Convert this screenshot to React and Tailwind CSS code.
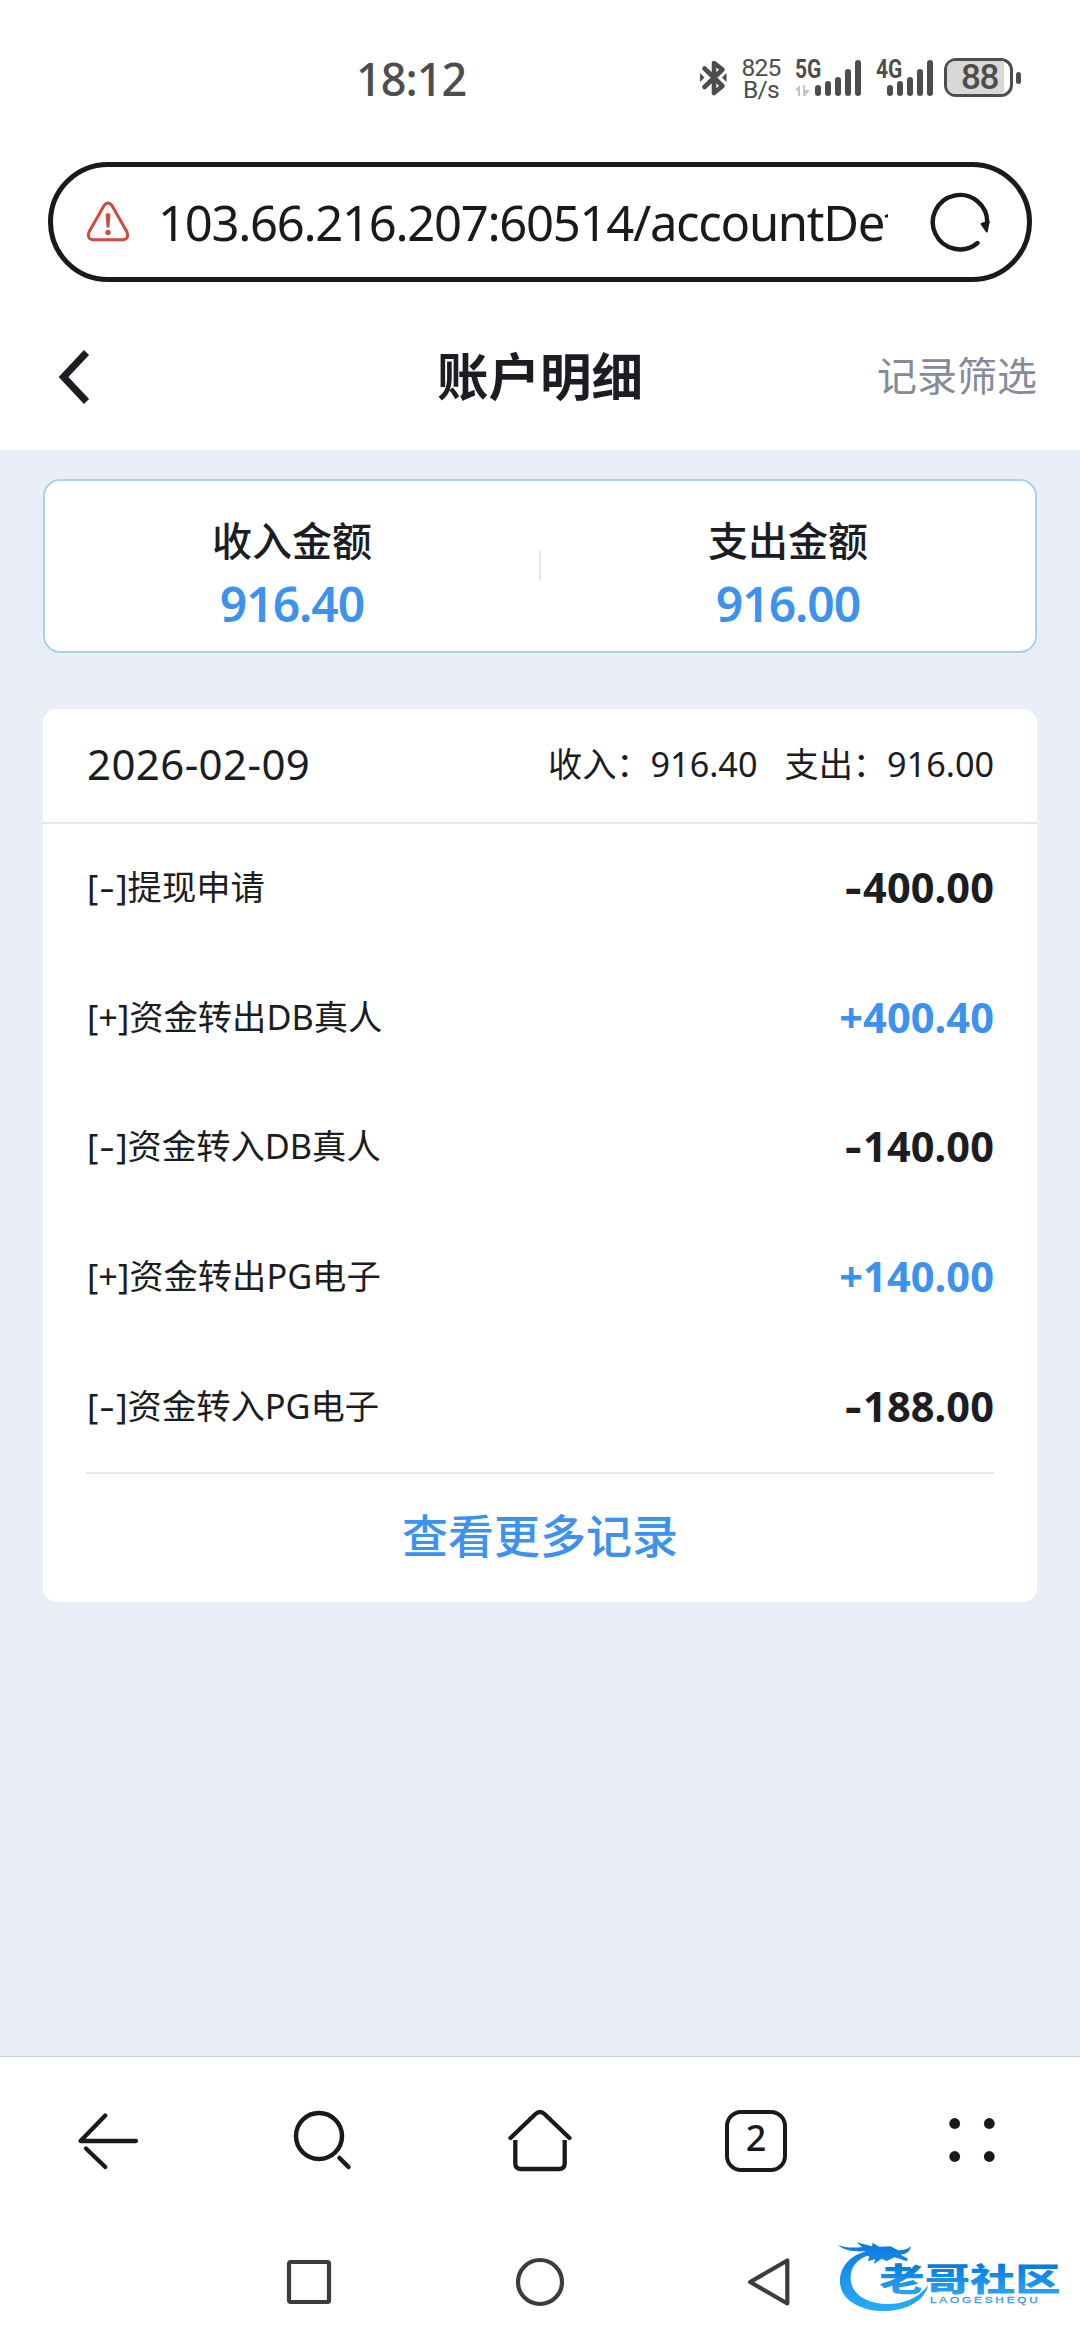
import React from "react";

const records = [
  { sign: "-", label: "提现申请", amount: "400.00" },
  { sign: "+", label: "资金转出DB真人", amount: "400.40" },
  { sign: "-", label: "资金转入DB真人", amount: "140.00" },
  { sign: "+", label: "资金转出PG电子", amount: "140.00" },
  { sign: "-", label: "资金转入PG电子", amount: "188.00" },
];

function Bluetooth() {
  return (
    <svg width="28" height="40" viewBox="0 0 28 40" fill="none" stroke="#4d4d4d" strokeWidth="4.6" strokeLinecap="round" strokeLinejoin="round">
      <path d="M4.5 11.5 L22.5 29 L14 36 V6 L22.5 12.5 L4.5 30" />
      <path d="M0 16 L4.5 20.5 L0 25 Z M26.5 16 L22 20.5 L26.5 25 Z" fill="#4d4d4d" stroke="none" />
    </svg>
  );
}

function Signal({ label, data }) {
  return (
    <div className="relative h-[40px] w-[66px]">
      <span className="absolute left-0 top-0 origin-left scale-x-[0.84] font-['Roboto'] text-[25px] font-bold leading-[20px]">{label}</span>
      <svg className="absolute left-0 top-0" width="66" height="40" viewBox="0 0 66 40">
        {data && <path d="M0 30 L5 25 V36 H3 V31 Z M8 25 H10 V30 H15 L10 36 H8 Z" fill="#c4c4c4" />}
        <g stroke="#4d4d4d" strokeWidth="6" strokeLinecap="round">
          <path d={data ? "M23 28 V33" : "M14 28 V33"} />
          <path d={data ? "M33 24 V33" : "M24 24 V33"} />
          <path d={data ? "M43 20 V33" : "M34 20 V33"} />
          <path d={data ? "M53 12 V33" : "M44 12 V33"} />
          <path d={data ? "M63 3 V33" : "M54 3 V33"} />
        </g>
      </svg>
    </div>
  );
}

function StatusBar() {
  return (
    <div className="flex h-[162px] items-start text-[#4d4d4d]">
      <div className="ml-[356px] mt-[53px] w-[344px] text-[45px] font-medium leading-[52px] tracking-[-1px]">18:12</div>
      <div className="mt-[57px] flex">
        <Bluetooth />
        <div className="ml-[12px] w-[42px] text-center font-['Roboto'] text-[24.5px] leading-[22px] tracking-[-0.7px]">
          <div>825</div>
          <div>B/s</div>
        </div>
        <div className="ml-[13px] mt-[3px]"><Signal label="5G" data /></div>
        <div className="ml-[15px] mt-[3px]"><Signal label="4G" /></div>
        <div className="ml-[2px] mt-[1px] flex h-[39px] items-center">
          <div className="flex h-[39px] w-[69px] rounded-[12px] border-[3px] border-[#4d4d4d]">
            <div className="flex h-full w-[57px] items-center justify-center rounded-l-[8px] bg-[#d8d8d8] pl-[8px] font-['Roboto'] text-[35px] font-medium leading-[30px] tracking-[-1.5px]">88</div>
          </div>
          <div className="ml-[3px] h-[12px] w-[5px] rounded-full bg-[#4d4d4d]" />
        </div>
      </div>
    </div>
  );
}

function AddressBar() {
  return (
    <div className="mx-[48px] flex h-[120px] items-center rounded-full border-[5px] border-[#1a1a1a]">
      <svg className="ml-[33px] shrink-0" width="44" height="42" viewBox="0 0 44 42" fill="none" stroke="#cf4a3c" strokeWidth="3">
        <path d="M18.2 4.2 Q22 -0.4 25.8 4.2 L41 31 Q43.4 37.6 37.5 38.8 H6.5 Q0.6 37.6 3 31 Z" strokeLinejoin="round" />
        <path d="M19.6 13 Q22 11.4 24.4 13 L23.4 26.6 H20.6 Z" fill="#cf4a3c" stroke="none" />
        <circle cx="22" cy="31.5" r="2.7" fill="#cf4a3c" stroke="none" />
      </svg>
      <div className="ml-[28px] w-[730px] overflow-hidden whitespace-nowrap text-[49px] leading-[70px] tracking-[-1.3px] text-[#1a1a1a]">
        103.66.216.207:60514/accountDetail
      </div>
      <svg className="ml-[40px] shrink-0" width="64" height="64" viewBox="0 0 64 64" fill="none" stroke="#1a1a1a" strokeWidth="4.4" strokeLinecap="round">
        <path d="M49.5 53 A27.2 27.2 0 1 1 59.2 33" />
        <path d="M53.5 34 L60.6 31.5 L58.8 41.5 Z" fill="#1a1a1a" strokeWidth="2" strokeLinejoin="round" />
      </svg>
    </div>
  );
}

function Header() {
  return (
    <div className="flex h-[168px] items-center justify-between pl-[58px] pr-[43px] pt-[19px]">
      <div className="w-[160px]">
        <svg width="34" height="56" viewBox="0 0 34 56" fill="none" stroke="#1b1d22" strokeWidth="7">
          <path d="M28.5 4.5 L5.5 29 L28.5 53.5" />
        </svg>
      </div>
      <h1 className="text-[51.5px] font-bold leading-[60px] text-[#1b1d22]">账户明细</h1>
      <div className="w-[175px] text-right text-[40px] leading-[50px] text-[#868b99]">记录筛选</div>
    </div>
  );
}

function Total({ title, value }) {
  return (
    <div className="flex flex-1 flex-col items-center">
      <div className="text-[40px] font-medium leading-[56px]">{title}</div>
      <div className="mt-[7px] text-[48px] font-semibold leading-[56px] tracking-[-1px] text-[#3c92ee]">{value}</div>
    </div>
  );
}

function Summary() {
  return (
    <div className="flex h-[174px] rounded-[17px] border-2 border-[#aad2ef] bg-white pt-[32px]">
      <Total title="收入金额" value="916.40" />
      <div className="mt-[38px] h-[29px] w-[2px] bg-[#e4e6e9]" />
      <Total title="支出金额" value="916.00" />
    </div>
  );
}

function Row({ sign, label, amount }) {
  const income = sign === "+";
  return (
    <div className="flex h-[129.6px] items-center justify-between pb-[3px]">
      <span className="pl-[1px] text-[34.3px] leading-[50px]">
        [<span className={income ? "inline-block" : "inline-block w-[18px] scale-x-[1.4] text-center"}>{sign}</span>]{label}
      </span>
      <span className={income ? "text-[41.5px] font-bold leading-[50px] tracking-[0.1px] text-[#3c92ee]" : "text-[41.5px] font-bold leading-[50px] tracking-[0.1px]"}>
        <span className={income ? "inline-block" : "inline-block w-[18px] origin-left scale-x-[1.25]"}>{sign}</span>
        {amount}
      </span>
    </div>
  );
}

function DayCard() {
  return (
    <div className="mt-[56px] rounded-[14px] bg-white">
      <div className="flex h-[115px] items-center justify-between border-b-2 border-[#e3e5e8] px-[43px] pb-[4px]">
        <div className="pl-[1px] text-[42px] leading-[50px] tracking-[0.4px]">2026-02-09</div>
        <div className="flex gap-[27px] text-[34.2px] leading-[50px]">
          <span>收入：916.40</span>
          <span>支出：916.00</span>
        </div>
      </div>
      <div className="px-[43px]">
        {records.map((r) => (
          <Row key={r.sign + r.label} {...r} />
        ))}
        <div className="flex h-[130px] items-center justify-center border-t-2 border-[#e3e5e8] pb-[6px] text-[46px] font-medium leading-[60px] text-[#3c92ee]">查看更多记录</div>
      </div>
    </div>
  );
}

function Toolbar() {
  return (
    <div className="grid h-[168px] grid-cols-5 items-center justify-items-center border-t border-[#c9cbd0] bg-white text-[#1a1a1a]">
      <svg width="64" height="64" viewBox="0 0 64 64" fill="none" stroke="currentColor" strokeWidth="4.3" strokeLinecap="round">
        <path d="M60 32 H4.5 L29.3 6.5" strokeLinejoin="round" />
        <path d="M10 39.5 L29.3 58" />
      </svg>
      <svg width="64" height="64" viewBox="0 0 64 64" fill="none" stroke="currentColor" strokeWidth="4.5" strokeLinecap="round">
        <circle cx="27" cy="27" r="23" />
        <path d="M47.5 49 L56.5 58" />
      </svg>
      <svg width="66" height="66" viewBox="0 0 66 66" fill="none" stroke="currentColor" strokeWidth="4.3" strokeLinecap="round" strokeLinejoin="round">
        <path d="M3.5 30 L28.5 6 Q33 2 37.5 6 L62.5 30" />
        <path d="M8.3 32 V55.5 Q8.3 61 14.3 61 H51.7 Q57.7 61 57.7 55.5 V32" strokeLinecap="butt" />
      </svg>
      <div className="flex h-[62px] w-[62px] items-center justify-center rounded-[16px] border-[4.5px] border-[#1a1a1a] pb-[5px] text-[36px] font-medium leading-[50px]">2</div>
      <svg width="64" height="64" viewBox="0 0 64 64" fill="currentColor">
        <circle cx="14.7" cy="14.5" r="5.4" />
        <circle cx="49.3" cy="14.5" r="5.4" />
        <circle cx="14.7" cy="47.5" r="5.4" />
        <circle cx="49.3" cy="47.5" r="5.4" />
      </svg>
    </div>
  );
}

function SystemNav() {
  return (
    <div className="flex h-[116px] items-center bg-white pl-[195px]">
      {[
        <rect key="s" x="5" y="6" width="40" height="40" rx="1.5" />,
        <circle key="c" cx="26" cy="26" r="22" />,
        <path key="t" d="M43.3 4.5 V47.5 L6.2 26 Z" />,
      ].map((shape) => (
        <div key={shape.key} className="flex w-[230px] justify-center">
          <svg width="52" height="52" viewBox="0 0 52 52" fill="none" stroke="#3c3c3c" strokeWidth="4.2" strokeLinejoin="round">{shape}</svg>
        </div>
      ))}
    </div>
  );
}

function CommunityLogo() {
  return (
    <svg className="absolute bottom-0 right-0" width="340" height="120" viewBox="0 0 1020 360">
      <defs>
        <linearGradient id="logoBlue" x1="0" y1="60" x2="0" y2="275" gradientUnits="userSpaceOnUse">
          <stop offset="0" stopColor="#0d78e0" />
          <stop offset="1" stopColor="#27adf6" />
        </linearGradient>
        <linearGradient id="wordBlue" x1="0" y1="130" x2="0" y2="222" gradientUnits="userSpaceOnUse">
          <stop offset="0" stopColor="#0878dd" />
          <stop offset="1" stopColor="#2ba2f2" />
        </linearGradient>
      </defs>
      <g fill="url(#logoBlue)">
        <path d="M385 92 C325 105 298 145 300 188 C304 245 370 276 440 273 C505 270 556 240 564 195 C545 225 505 250 450 252 C385 254 335 225 332 178 C330 142 350 115 392 104 Z" />
        <path d="M295 76 C318 84 345 84 366 81 L350 67 L396 79 L398 68 L418 80 L452 79 L474 91 C490 91 505 87 512 78 C512 94 500 102 482 104 L504 116 L500 124 L464 112 L440 123 L425 116 L402 132 L405 118 L384 124 L388 108 L368 105 L376 94 C345 96 310 92 295 76 Z" />
      </g>
      <text x="418" y="212" textLength="544" lengthAdjust="spacingAndGlyphs" fontFamily="Noto Sans CJK SC, sans-serif" fontWeight="900" fontSize="96" fill="url(#wordBlue)">老哥社区</text>
      <text x="570" y="250" textLength="332" lengthAdjust="spacingAndGlyphs" fontFamily="Liberation Sans, sans-serif" fontSize="29" letterSpacing="7" fill="#3f9ae6" stroke="#3f9ae6" strokeWidth="1">LAOGESHEQU</text>
    </svg>
  );
}

export default function App() {
  return (
    <div className="relative flex h-[2340px] w-[1080px] flex-col overflow-hidden bg-white font-['Noto_Sans','Noto_Sans_CJK_SC',sans-serif] text-[#1b1d22]">
      <StatusBar />
      <AddressBar />
      <Header />
      <main className="flex-1 bg-[#e9eef8] px-[43px] pt-[29px]">
        <Summary />
        <DayCard />
      </main>
      <Toolbar />
      <SystemNav />
      <CommunityLogo />
    </div>
  );
}
